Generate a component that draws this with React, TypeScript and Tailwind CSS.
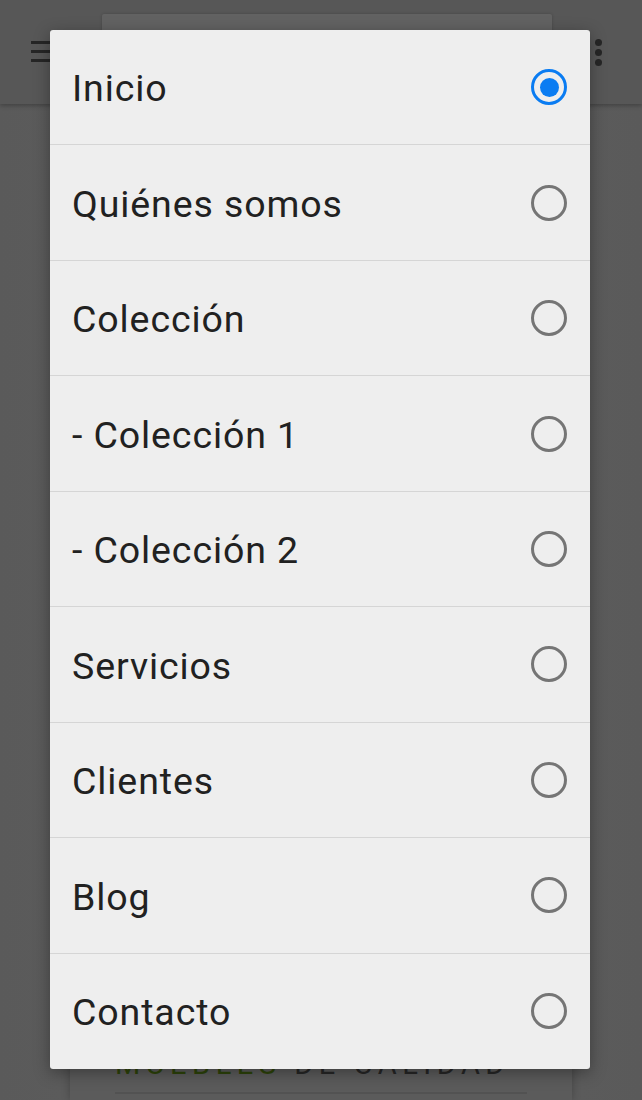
import React from "react";

const items = [
  "Inicio",
  "Quiénes somos",
  "Colección",
  "- Colección 1",
  "- Colección 2",
  "Servicios",
  "Clientes",
  "Blog",
  "Contacto",
];

function Radio({ checked }: { checked: boolean }) {
  return checked ? (
    <div className="w-[36px] h-[36px] rounded-full border-[3px] border-[#0a7cf2] flex items-center justify-center shrink-0">
      <div className="w-[19px] h-[19px] rounded-full bg-[#0a7cf2]" />
    </div>
  ) : (
    <div className="w-[36px] h-[36px] rounded-full border-[3px] border-[#757575] shrink-0" />
  );
}

export default function App() {
  return (
    <div
      className="relative w-[642px] h-[1100px] overflow-hidden bg-[#5c5c5c]"
      style={{ fontFamily: "Roboto, 'Noto Sans', sans-serif" }}
    >
      {/* Underlying page (dimmed) */}
      <div className="relative h-[104px] bg-[#575757] shadow-[0_2px_4px_rgba(0,0,0,0.25)] flex items-start z-10">
        <div className="flex flex-col gap-[6px] mt-[41px] ml-[31px] w-[24px]">
          <div className="h-[3px] bg-[#262626]" />
          <div className="h-[3px] bg-[#262626]" />
          <div className="h-[3px] bg-[#262626]" />
        </div>
        <div className="ml-[47px] mt-[14px] w-[450px] h-[90px] bg-[#626262] rounded-t-[2px] shadow-[0_0_3px_rgba(0,0,0,0.2)]" />
        <div className="ml-[43px] mt-[39px] flex flex-col gap-[3px]">
          <div className="w-[7px] h-[7px] rounded-full bg-[#262626]" />
          <div className="w-[7px] h-[7px] rounded-full bg-[#262626]" />
          <div className="w-[7px] h-[7px] rounded-full bg-[#262626]" />
        </div>
      </div>
      <div className="h-[996px] flex flex-col justify-end items-center bg-gradient-to-r from-[#5a5a5a] via-[#5f5f5f] to-[#5a5a5a]">
        <div className="w-[502px] h-[700px] bg-[#5b5b5b] shadow-[0_0_8px_rgba(0,0,0,0.25)] px-[45px] flex flex-col justify-end">
          <div className="text-[29px] leading-[34px] tracking-[5.5px] text-[#262626] whitespace-nowrap">
            <span className="text-[#2d4409]">MUEBLES</span> DE CALIDAD
          </div>
          <div className="h-[2px] bg-[#525252] mt-[11px] mb-[6px]" />
        </div>
      </div>

      {/* Dialog */}
      <div className="absolute left-[50px] top-[30px] w-[540px] bg-[#eeeeee] rounded-[3px] shadow-[0_4px_16px_rgba(0,0,0,0.35)] z-20 overflow-hidden">
        {items.map((label, i) => (
          <div
            key={label}
            className={`h-[115.45px] flex items-center justify-between pl-[22px] pr-[23px] ${
              i < items.length - 1 ? "border-b border-[#d5d5d5]" : ""
            }`}
          >
            <span className="text-[37.5px] tracking-[0.9px] text-[#212121] leading-none pt-[4px]">
              {label}
            </span>
            <Radio checked={i === 0} />
          </div>
        ))}
      </div>
    </div>
  );
}
